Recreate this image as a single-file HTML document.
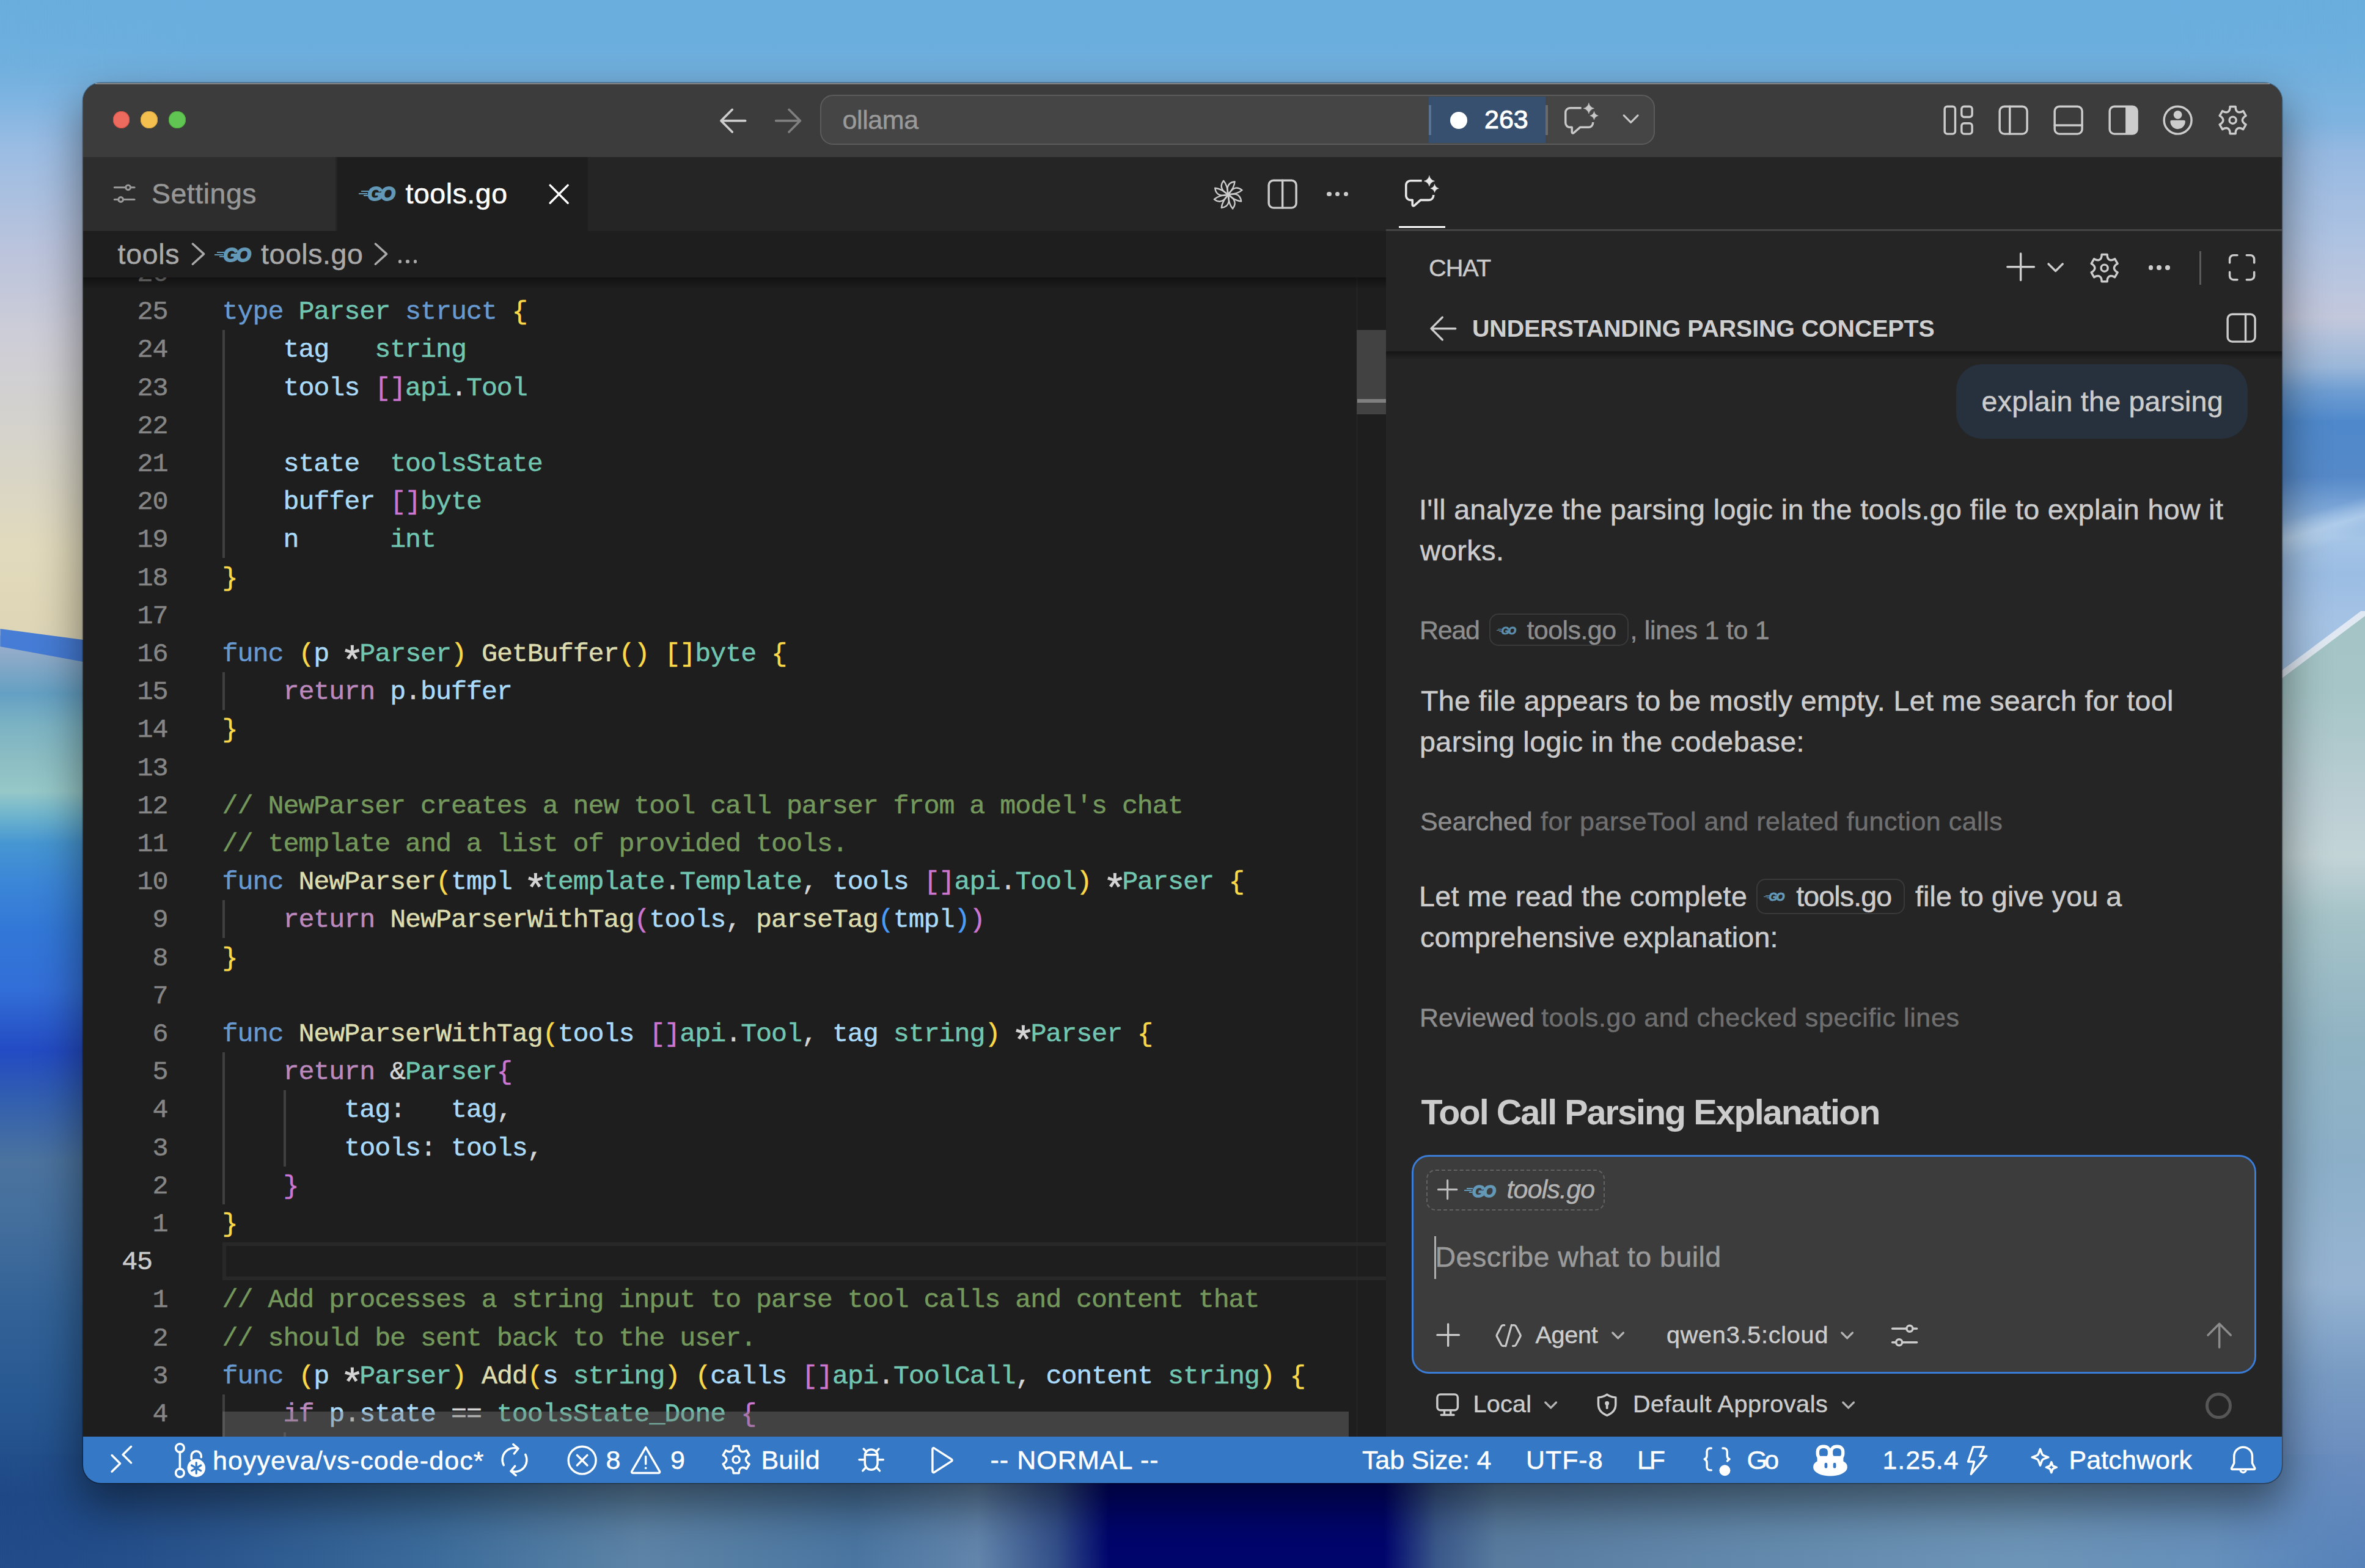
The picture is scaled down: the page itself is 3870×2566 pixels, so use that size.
<!DOCTYPE html>
<html><head><meta charset="utf-8"><title>tools.go - ollama</title>
<style>
html,body{margin:0;padding:0}
body{width:3870px;height:2566px;position:relative;overflow:hidden;background:#6aaedd;font-family:"Liberation Sans",sans-serif}
div,span.t,svg{position:absolute}
span.t{white-space:pre;display:block}

.cl,.ln{font:43.4px/62.2px "Liberation Mono",monospace;letter-spacing:-1.084px;white-space:pre;height:62.2px;color:#d4d4d4;-webkit-text-stroke:.5px}.as{display:inline-block;transform:translateY(15.5px) scale(1.5)}.ln{color:#858585;text-align:right}
</style></head><body>
<div style="left:0.0px;top:0.0px;width:420.0px;height:2566.0px;background:linear-gradient(180deg,#69aedd 0px,#6fb0de 100px,#7db4e1 160px,#9abce3 240px,#b9c3dc 400px,#cdcdd7 550px,#d7d4c8 750px,#e1dabc 900px,#ded6b6 1010px,#d8d2b8 1120px);"></div>
<div style="left:0.0px;top:0.0px;width:420.0px;height:2566.0px;background:linear-gradient(180deg,#a0b0cc 1040px,#8caac8 1075px,#64a0c3 1135px,#7db4c3 1190px,#8cbec3 1246px,#96c8c8 1295px,#6eb4cd 1335px,#4696d2 1380px,#3c87d7 1440px,#3278d7 1520px,#326ed7 1620px,#234bc3 1720px,#325faf 1800px,#4b739e 1900px,#436e9c 2000px,#316196 2150px,#275790 2300px,#1e4986 2450px,#224d8a 2566px);clip-path:polygon(0px 1040px,420px 1107px,420px 2566px,0px 2566px);"></div>
<div style="left:0.0px;top:1000.0px;width:420.0px;height:120.0px;background:linear-gradient(180deg,#4a7fd6 0%,#447bd5 70%,#86a3e0 100%);clip-path:polygon(0px 29px,136px 47px,420px 80px,420px 118px,136px 83px,0px 58px);filter:blur(1.2px);"></div>
<div style="left:3450.0px;top:0.0px;width:420.0px;height:2566.0px;background:linear-gradient(180deg,#69aedd 0px,#6fb0de 100px,#7fb3df 200px,#96b9e1 250px,#afc3e1 400px,#c3c8dc 520px,#9bb7d9 600px,#6e9dd2 640px,#4f89cb 690px,#5589c8 780px,#7aa5d7 830px,#a5c5e6 880px,#9bbde3 940px,#a5c3e4 1020px,#a0bfe0 1200px);"></div>
<div style="left:3450.0px;top:0.0px;width:420.0px;height:2566.0px;background:linear-gradient(180deg,#a3c3c4 980px,#a5c5c6 1130px,#b9cdd2 1300px,#c3d4d7 1400px,#a5c3c8 1500px,#91b4c3 1700px,#8cafc8 1900px,#96b4d2 2100px,#789bc3 2250px,#698cbe 2400px,#5582b9 2566px);clip-path:polygon(0px 1317px,420px 1002px,420px 2566px,0px 2566px);"></div>
<div style="left:3350.0px;top:850.0px;width:800.0px;height:60.0px;background:linear-gradient(180deg,rgba(190,215,240,0),rgba(190,215,240,.65) 50%,rgba(190,215,240,0));transform:rotate(-17deg);transform-origin:50% 50%;"></div>
<div style="left:3450.0px;top:1000.0px;width:420.0px;height:330.0px;background:rgba(228,234,243,.95);clip-path:polygon(0px 310px,420px -5px,420px 8px,0px 323px);"></div>
<div style="left:0.0px;top:0.0px;width:3870.0px;height:138.0px;background:linear-gradient(180deg,#69aedd 0%,#6aaedd 50%,#74b0dd 100%);-webkit-mask-image:linear-gradient(90deg,transparent 0px,#000 330px,#000 3540px,transparent 3870px);mask-image:linear-gradient(90deg,transparent 0px,#000 330px,#000 3540px,transparent 3870px);"></div>
<div style="left:0.0px;top:2380.0px;width:3870.0px;height:186.0px;background:linear-gradient(90deg,#1e4986 0px,#27528b 300px,#3b6b9a 700px,#5d84a6 1050px,#4a75a0 1400px,#6285ab 1600px,#324e88 1730px,#00056c 1815px,#00056c 2265px,#3a588a 2350px,#587b9e 2450px,#638aac 2900px,#6c94b6 3300px,#648ebb 3700px,#5d8abc 3870px);-webkit-mask-image:linear-gradient(90deg,transparent 0px,#000 250px,#000 3620px,transparent 3870px);mask-image:linear-gradient(90deg,transparent 0px,#000 250px,#000 3620px,transparent 3870px);"></div>
<div style="left:136.0px;top:136.0px;width:3598.0px;height:2291.0px;border-radius:29px;background:#1e1e1e;box-shadow:0 34px 70px 6px rgba(0,0,0,.45),0 0 0 1.5px rgba(0,0,0,.35);"></div>
<div id="win" style="left:0;top:0;width:3870px;height:2566px;clip-path:inset(136px 136px 139px 136px round 29px)">
<div style="left:136.0px;top:136.0px;width:3598.0px;height:121.0px;background:#3c3c3c;"></div>
<div style="left:184.5px;top:182.2px;width:27.6px;height:27.6px;border-radius:50%;background:#ed6a5e;box-shadow:inset 0 0 0 1px #d55247;"></div>
<div style="left:230.4px;top:182.2px;width:27.6px;height:27.6px;border-radius:50%;background:#f4bf4f;box-shadow:inset 0 0 0 1px #d6a243;"></div>
<div style="left:276.3px;top:182.2px;width:27.6px;height:27.6px;border-radius:50%;background:#61c554;box-shadow:inset 0 0 0 1px #4fa73d;"></div>
<svg style="left:1171.8px;top:170.3px;" width="55.3" height="55.3" viewBox="0 0 16 16" fill="none" stroke="#cccccc" stroke-width="1.05" stroke-linecap="round" stroke-linejoin="round"><path d="M13.8 8H2.4M7.6 2.7L2.3 8l5.3 5.3"/></svg>
<svg style="left:1261.8px;top:170.3px;" width="55.3" height="55.3" viewBox="0 0 16 16" fill="none" stroke="#7f7f7f" stroke-width="1.05" stroke-linecap="round" stroke-linejoin="round"><path d="M2.2 8h11.4M8.4 2.7L13.7 8l-5.3 5.3"/></svg>
<div style="left:1342.0px;top:155.0px;width:1366.0px;height:82.0px;box-sizing:border-box;border:2.6px solid #5c5c5c;border-radius:21px;background:#454545;"></div>
<span class="t" style="left:1378.47px;top:174.79px;font:400 43px/43px 'Liberation Sans',sans-serif;color:#9a9a9a;letter-spacing:-0.389px;-webkit-text-stroke:0.47px;">ollama</span>
<div style="left:2338.0px;top:158.0px;width:191.0px;height:76.0px;background:#38506f;"></div>
<div style="left:2338.0px;top:172.0px;width:4.0px;height:49.0px;background:#5b7392;"></div>
<div style="left:2529.0px;top:172.0px;width:4.0px;height:49.0px;background:#6a6a6a;"></div>
<div style="left:2372.8px;top:182.5px;width:28.0px;height:28.0px;border-radius:50%;background:#fff;"></div>
<span class="t" style="left:2429.00px;top:174.29px;font:400 43px/43px 'Liberation Sans',sans-serif;color:#ffffff;-webkit-text-stroke:1.00px;">263</span>
<svg style="left:2560.3px;top:166.7px;" width="55.3" height="55.3" viewBox="0 0 16 16" fill="none" stroke="#c8c8c8" stroke-width="1.0" stroke-linecap="round" stroke-linejoin="round"><path d="M8 2.82H2.61A2.1 2.1 0 0 0 .51 4.92V9.86A2.1 2.1 0 0 0 2.61 11.96H3.54V14.25a.5.5 0 0 0 .84.37L7.39 11.96H11.4A2.1 2.1 0 0 0 13.5 9.86V9.55" stroke-linecap="butt"/><path d="M11.53 0.49Q12.03 2.49 14.03 2.99Q12.03 3.49 11.53 5.49Q11.03 3.49 9.03 2.99Q11.03 2.49 11.53 0.49ZM14.05 4.52Q14.44 6.08 16.00 6.47Q14.44 6.86 14.05 8.42Q13.66 6.86 12.10 6.47Q13.66 6.08 14.05 4.52Z" fill="#c8c8c8" stroke="#c8c8c8" stroke-width=".15"/></svg>
<svg style="left:2641.3px;top:167.0px;" width="55.3" height="55.3" viewBox="0 0 16 16" fill="none" stroke="#c8c8c8" stroke-width="0.9" stroke-linecap="round" stroke-linejoin="round"><path d="M4.7 6.35L8 9.65l3.300-3.300"/></svg>
<svg style="left:3177.3px;top:169.3px;" width="55.3" height="55.3" viewBox="0 0 16 16" fill="none" stroke="#ccc" stroke-width="1.0" stroke-linecap="round" stroke-linejoin="round"><rect x="1.5" y="1.5" width="5" height="13" rx="1.2"/><rect x="9.5" y="1.5" width="5" height="5" rx="1.2"/><rect x="9.5" y="9.5" width="5" height="5" rx="1.2"/></svg>
<svg style="left:3267.3px;top:169.3px;" width="55.3" height="55.3" viewBox="0 0 16 16" fill="none" stroke="#ccc" stroke-width="1.0" stroke-linecap="round" stroke-linejoin="round"><rect x="1.5" y="1.5" width="13" height="13" rx="2.2"/><path d="M6.300 1.500v13"/></svg>
<svg style="left:3357.3px;top:169.3px;" width="55.3" height="55.3" viewBox="0 0 16 16" fill="none" stroke="#ccc" stroke-width="1.0" stroke-linecap="round" stroke-linejoin="round"><rect x="1.5" y="1.5" width="13" height="13" rx="2.2"/><path d="M1.5 10.4h13"/></svg>
<svg style="left:3447.3px;top:169.3px;" width="55.3" height="55.3" viewBox="0 0 16 16" fill="none" stroke="#ccc" stroke-width="1.0" stroke-linecap="round" stroke-linejoin="round"><path d="M9 1.5h3.3a2.2 2.2 0 0 1 2.2 2.2v8.6a2.2 2.2 0 0 1-2.2 2.2H9z" fill="#ccc" stroke="none"/><rect x="1.5" y="1.5" width="13" height="13" rx="2.2"/></svg>
<svg style="left:3536.3px;top:169.3px;" width="55.3" height="55.3" viewBox="0 0 16 16" fill="none" stroke="#ccc" stroke-width="1.0" stroke-linecap="round" stroke-linejoin="round"><circle cx="8" cy="8" r="6.5"/><circle cx="8" cy="5.45" r="2" fill="#ccc" stroke="none"/><path d="M5.2 8.05h5.6a.75.75 0 0 1 .75.8c-.15 1.9-1.6 3.35-3.55 3.35S4.6 10.750 4.450 8.850a.75.75 0 0 1 .75-.8z" fill="#ccc" stroke="none"/></svg>
<svg style="left:3626.3px;top:169.3px;" width="55.3" height="55.3" viewBox="0 0 16 16" fill="none" stroke="#ccc" stroke-width="1.0" stroke-linecap="round" stroke-linejoin="round"><path d="M6.69 1.58L9.31 1.58Q9.27 3.42 10.28 4.06Q11.33 4.61 12.91 3.66L14.21 5.92Q12.60 6.81 12.55 8.00Q12.60 9.19 14.21 10.08L12.91 12.34Q11.33 11.39 10.28 11.94Q9.27 12.58 9.31 14.42L6.69 14.42Q6.73 12.58 5.73 11.94Q4.67 11.39 3.09 12.34L1.79 10.08Q3.40 9.19 3.45 8.00Q3.40 6.81 1.79 5.92L3.09 3.66Q4.67 4.61 5.72 4.06Q6.73 3.42 6.69 1.58Z"/><circle cx="8" cy="8" r="1.6"/></svg>
<div style="left:136.0px;top:257.0px;width:3598.0px;height:121.0px;background:#252526;"></div>
<div style="left:136.0px;top:257.0px;width:412.5px;height:121.0px;background:#2d2d2d;"></div>
<div style="left:548.5px;top:257.0px;width:3.0px;height:121.0px;background:#252526;"></div>
<div style="left:551.5px;top:257.0px;width:410.0px;height:121.0px;background:#1e1e1e;"></div>
<svg style="left:175.8px;top:288.9px;" width="55.3" height="55.3" viewBox="0 0 16 16" fill="none" stroke="#9a9a9a" stroke-width="0.88" stroke-linecap="round" stroke-linejoin="round"><path d="M3.250 5.150h5.400M10.850 5.150h1.900M3.250 10.850h1.900M7.350 10.850h5.400"/><circle cx="9.740" cy="5.150" r="1.120"/><circle cx="6.260" cy="10.850" r="1.120"/></svg>
<span class="t" style="left:248.01px;top:293.63px;font:400 46.5px/46.5px 'Liberation Sans',sans-serif;color:#979797;letter-spacing:0.497px;-webkit-text-stroke:0.51px;">Settings</span>
<span class="t" style="left:601.2px;top:302.3px;font:italic 700 31.7px/31.7px 'Liberation Sans',sans-serif;color:#6398b7;letter-spacing:-3.62px;-webkit-text-stroke:1.76px #6398b7;transform:scaleX(1.0);transform-origin:0 0">GO</span>
<div style="left:591.1px;top:312.3px;width:11.6px;height:1.7px;background:#6398b7;"></div>
<div style="left:586.6px;top:315.9px;width:14.1px;height:1.7px;background:#6398b7;"></div>
<div style="left:595.2px;top:319.4px;width:6.5px;height:1.7px;background:#6398b7;"></div>
<span class="t" style="left:663.51px;top:293.63px;font:400 46.5px/46.5px 'Liberation Sans',sans-serif;color:#ffffff;letter-spacing:0.525px;-webkit-text-stroke:0.51px;">tools.go</span>
<svg style="left:886.6px;top:289.9px;" width="55.3" height="55.3" viewBox="0 0 16 16" fill="none" stroke="#ffffff" stroke-width="1.0" stroke-linecap="round" stroke-linejoin="round"><path d="M3.800 3.800l8.400 8.400M12.200 3.800l-8.400 8.400"/></svg>
<svg style="left:1981.8px;top:290.5px;" width="55.3" height="55.3" viewBox="0 0 16 16" fill="none" stroke="#ccc" stroke-width="0.7" stroke-linecap="round" stroke-linejoin="round"><path d="M0 0C-1.3 -1.6 -3.5 -4.6 .1 -6.95C.9 -5 .6 -2.2 0 0Z" transform="translate(8 8) rotate(-19)"/><path d="M0 0C-1.3 -1.6 -3.5 -4.6 .1 -6.95C.9 -5 .6 -2.2 0 0Z" transform="translate(8 8) rotate(26)"/><path d="M0 0C-1.3 -1.6 -3.5 -4.6 .1 -6.95C.9 -5 .6 -2.2 0 0Z" transform="translate(8 8) rotate(71)"/><path d="M0 0C-1.3 -1.6 -3.5 -4.6 .1 -6.95C.9 -5 .6 -2.2 0 0Z" transform="translate(8 8) rotate(116)"/><path d="M0 0C-1.3 -1.6 -3.5 -4.6 .1 -6.95C.9 -5 .6 -2.2 0 0Z" transform="translate(8 8) rotate(161)"/><path d="M0 0C-1.3 -1.6 -3.5 -4.6 .1 -6.95C.9 -5 .6 -2.2 0 0Z" transform="translate(8 8) rotate(206)"/><path d="M0 0C-1.3 -1.6 -3.5 -4.6 .1 -6.95C.9 -5 .6 -2.2 0 0Z" transform="translate(8 8) rotate(251)"/><path d="M0 0C-1.3 -1.6 -3.5 -4.6 .1 -6.95C.9 -5 .6 -2.2 0 0Z" transform="translate(8 8) rotate(296)"/></svg>
<svg style="left:2071.3px;top:289.6px;" width="55.3" height="55.3" viewBox="0 0 16 16" fill="none" stroke="#ccc" stroke-width="1.0" stroke-linecap="round" stroke-linejoin="round"><rect x="1.500" y="1.500" width="13" height="13" rx="2.200"/><path d="M8 1.500v13"/></svg>
<div style="left:2171.4px;top:313.8px;width:7.2px;height:7.2px;border-radius:50%;background:#ccc;"></div>
<div style="left:2185.2px;top:313.8px;width:7.2px;height:7.2px;border-radius:50%;background:#ccc;"></div>
<div style="left:2198.9px;top:313.8px;width:7.2px;height:7.2px;border-radius:50%;background:#ccc;"></div>
<svg style="left:2299.3px;top:286.1px;" width="55.3" height="55.3" viewBox="0 0 16 16" fill="none" stroke="#e7e7e7" stroke-width="1.05" stroke-linecap="round" stroke-linejoin="round"><path d="M8 2.82H2.61A2.1 2.1 0 0 0 .51 4.92V9.86A2.1 2.1 0 0 0 2.61 11.96H3.54V14.25a.5.5 0 0 0 .84.37L7.39 11.96H11.4A2.1 2.1 0 0 0 13.5 9.86V9.55" stroke-linecap="butt"/><path d="M11.53 0.49Q12.03 2.49 14.03 2.99Q12.03 3.49 11.53 5.49Q11.03 3.49 9.03 2.99Q11.03 2.49 11.53 0.49ZM14.05 4.52Q14.44 6.08 16.00 6.47Q14.44 6.86 14.05 8.42Q13.66 6.86 12.10 6.47Q13.66 6.08 14.05 4.52Z" fill="#e7e7e7" stroke="#e7e7e7" stroke-width=".15"/></svg>
<div style="left:2289.0px;top:370.0px;width:76.0px;height:3.2px;background:#ffffff;"></div>
<div style="left:136.0px;top:454.0px;width:2132.0px;height:1897.0px;background:#1e1e1e;"></div>
<div style="left:364.4px;top:540.2px;width:3.4px;height:373.2px;background:#404040;"></div>
<div style="left:364.4px;top:1100.0px;width:3.4px;height:62.2px;background:#404040;"></div>
<div style="left:364.4px;top:1473.2px;width:3.4px;height:62.2px;background:#404040;"></div>
<div style="left:364.4px;top:1722.0px;width:3.4px;height:248.8px;background:#404040;"></div>
<div style="left:364.4px;top:2281.8px;width:3.4px;height:186.6px;background:#404040;"></div>
<div style="left:464.2px;top:1784.2px;width:3.4px;height:124.4px;background:#404040;"></div>
<div style="left:464.2px;top:2344.0px;width:3.4px;height:124.4px;background:#404040;"></div>
<div style="left:364.4px;top:2033.2px;width:1903.6px;height:61.5px;box-sizing:border-box;border:6.4px solid #282828;border-right:none;"></div>
<div class="ln" style="left:174.44px;top:417.90px;width:100px">26</div>
<div class="ln" style="left:174.44px;top:480.10px;width:100px">25</div>
<div class="cl" style="left:363.6px;top:480.10px"><span style="color:#679ad1">type</span> <span style="color:#71c6b1">Parser</span> <span style="color:#679ad1">struct</span> <span style="color:#f9d849">{</span></div>
<div class="ln" style="left:174.44px;top:542.30px;width:100px">24</div>
<div class="cl" style="left:363.6px;top:542.30px">    <span style="color:#aadafa">tag</span>   <span style="color:#71c6b1">string</span></div>
<div class="ln" style="left:174.44px;top:604.50px;width:100px">23</div>
<div class="cl" style="left:363.6px;top:604.50px">    <span style="color:#aadafa">tools</span> <span style="color:#cc76d1">[]</span><span style="color:#71c6b1">api</span>.<span style="color:#71c6b1">Tool</span></div>
<div class="ln" style="left:174.44px;top:666.70px;width:100px">22</div>
<div class="ln" style="left:174.44px;top:728.90px;width:100px">21</div>
<div class="cl" style="left:363.6px;top:728.90px">    <span style="color:#aadafa">state</span>  <span style="color:#71c6b1">toolsState</span></div>
<div class="ln" style="left:174.44px;top:791.10px;width:100px">20</div>
<div class="cl" style="left:363.6px;top:791.10px">    <span style="color:#aadafa">buffer</span> <span style="color:#cc76d1">[]</span><span style="color:#71c6b1">byte</span></div>
<div class="ln" style="left:174.44px;top:853.30px;width:100px">19</div>
<div class="cl" style="left:363.6px;top:853.30px">    <span style="color:#aadafa">n</span>      <span style="color:#71c6b1">int</span></div>
<div class="ln" style="left:174.44px;top:915.50px;width:100px">18</div>
<div class="cl" style="left:363.6px;top:915.50px"><span style="color:#f9d849">}</span></div>
<div class="ln" style="left:174.44px;top:977.70px;width:100px">17</div>
<div class="ln" style="left:174.44px;top:1039.90px;width:100px">16</div>
<div class="cl" style="left:363.6px;top:1039.90px"><span style="color:#679ad1">func</span> <span style="color:#f9d849">(</span><span style="color:#aadafa">p</span> <span class="as">*</span><span style="color:#71c6b1">Parser</span><span style="color:#f9d849">)</span> <span style="color:#dcdcaf">GetBuffer</span><span style="color:#f9d849">()</span> <span style="color:#f9d849">[]</span><span style="color:#71c6b1">byte</span> <span style="color:#f9d849">{</span></div>
<div class="ln" style="left:174.44px;top:1102.10px;width:100px">15</div>
<div class="cl" style="left:363.6px;top:1102.10px">    <span style="color:#bc89bd">return</span> <span style="color:#aadafa">p</span>.<span style="color:#aadafa">buffer</span></div>
<div class="ln" style="left:174.44px;top:1164.30px;width:100px">14</div>
<div class="cl" style="left:363.6px;top:1164.30px"><span style="color:#f9d849">}</span></div>
<div class="ln" style="left:174.44px;top:1226.50px;width:100px">13</div>
<div class="ln" style="left:174.44px;top:1288.70px;width:100px">12</div>
<div class="cl" style="left:363.6px;top:1288.70px"><span style="color:#74985c">// NewParser creates a new tool call parser from a model's chat</span></div>
<div class="ln" style="left:174.44px;top:1350.90px;width:100px">11</div>
<div class="cl" style="left:363.6px;top:1350.90px"><span style="color:#74985c">// template and a list of provided tools.</span></div>
<div class="ln" style="left:174.44px;top:1413.10px;width:100px">10</div>
<div class="cl" style="left:363.6px;top:1413.10px"><span style="color:#679ad1">func</span> <span style="color:#dcdcaf">NewParser</span><span style="color:#f9d849">(</span><span style="color:#aadafa">tmpl</span> <span class="as">*</span><span style="color:#71c6b1">template</span>.<span style="color:#71c6b1">Template</span>, <span style="color:#aadafa">tools</span> <span style="color:#cc76d1">[]</span><span style="color:#71c6b1">api</span>.<span style="color:#71c6b1">Tool</span><span style="color:#f9d849">)</span> <span class="as">*</span><span style="color:#71c6b1">Parser</span> <span style="color:#f9d849">{</span></div>
<div class="ln" style="left:174.44px;top:1475.30px;width:100px">9</div>
<div class="cl" style="left:363.6px;top:1475.30px">    <span style="color:#bc89bd">return</span> <span style="color:#dcdcaf">NewParserWithTag</span><span style="color:#cc76d1">(</span><span style="color:#aadafa">tools</span>, <span style="color:#dcdcaf">parseTag</span><span style="color:#4a9df8">(</span><span style="color:#aadafa">tmpl</span><span style="color:#4a9df8">)</span><span style="color:#cc76d1">)</span></div>
<div class="ln" style="left:174.44px;top:1537.50px;width:100px">8</div>
<div class="cl" style="left:363.6px;top:1537.50px"><span style="color:#f9d849">}</span></div>
<div class="ln" style="left:174.44px;top:1599.70px;width:100px">7</div>
<div class="ln" style="left:174.44px;top:1661.90px;width:100px">6</div>
<div class="cl" style="left:363.6px;top:1661.90px"><span style="color:#679ad1">func</span> <span style="color:#dcdcaf">NewParserWithTag</span><span style="color:#f9d849">(</span><span style="color:#aadafa">tools</span> <span style="color:#cc76d1">[]</span><span style="color:#71c6b1">api</span>.<span style="color:#71c6b1">Tool</span>, <span style="color:#aadafa">tag</span> <span style="color:#71c6b1">string</span><span style="color:#f9d849">)</span> <span class="as">*</span><span style="color:#71c6b1">Parser</span> <span style="color:#f9d849">{</span></div>
<div class="ln" style="left:174.44px;top:1724.10px;width:100px">5</div>
<div class="cl" style="left:363.6px;top:1724.10px">    <span style="color:#bc89bd">return</span> &amp;<span style="color:#71c6b1">Parser</span><span style="color:#cc76d1">{</span></div>
<div class="ln" style="left:174.44px;top:1786.30px;width:100px">4</div>
<div class="cl" style="left:363.6px;top:1786.30px">        <span style="color:#aadafa">tag</span>:   <span style="color:#aadafa">tag</span>,</div>
<div class="ln" style="left:174.44px;top:1848.50px;width:100px">3</div>
<div class="cl" style="left:363.6px;top:1848.50px">        <span style="color:#aadafa">tools</span>: <span style="color:#aadafa">tools</span>,</div>
<div class="ln" style="left:174.44px;top:1910.70px;width:100px">2</div>
<div class="cl" style="left:363.6px;top:1910.70px">    <span style="color:#cc76d1">}</span></div>
<div class="ln" style="left:174.44px;top:1972.90px;width:100px">1</div>
<div class="cl" style="left:363.6px;top:1972.90px"><span style="color:#f9d849">}</span></div>
<div class="ln" style="left:199.14px;top:2035.10px;color:#cccccc;text-align:left">45</div>
<div class="ln" style="left:174.44px;top:2097.30px;width:100px">1</div>
<div class="cl" style="left:363.6px;top:2097.30px"><span style="color:#74985c">// Add processes a string input to parse tool calls and content that</span></div>
<div class="ln" style="left:174.44px;top:2159.50px;width:100px">2</div>
<div class="cl" style="left:363.6px;top:2159.50px"><span style="color:#74985c">// should be sent back to the user.</span></div>
<div class="ln" style="left:174.44px;top:2221.70px;width:100px">3</div>
<div class="cl" style="left:363.6px;top:2221.70px"><span style="color:#679ad1">func</span> <span style="color:#f9d849">(</span><span style="color:#aadafa">p</span> <span class="as">*</span><span style="color:#71c6b1">Parser</span><span style="color:#f9d849">)</span> <span style="color:#dcdcaf">Add</span><span style="color:#f9d849">(</span><span style="color:#aadafa">s</span> <span style="color:#71c6b1">string</span><span style="color:#f9d849">)</span> <span style="color:#f9d849">(</span><span style="color:#aadafa">calls</span> <span style="color:#cc76d1">[]</span><span style="color:#71c6b1">api</span>.<span style="color:#71c6b1">ToolCall</span>, <span style="color:#aadafa">content</span> <span style="color:#71c6b1">string</span><span style="color:#f9d849">)</span> <span style="color:#f9d849">{</span></div>
<div class="ln" style="left:174.44px;top:2283.90px;width:100px">4</div>
<div class="cl" style="left:363.6px;top:2283.90px">    <span style="color:#bc89bd">if</span> <span style="color:#aadafa">p</span>.<span style="color:#aadafa">state</span> == <span style="color:#71c6b1">toolsState_Done</span> <span style="color:#cc76d1">{</span></div>
<div style="left:364.4px;top:2309.5px;width:1842.6px;height:42.0px;background:rgba(121,121,121,.4);"></div>
<div style="left:2220.0px;top:454.0px;width:1.3px;height:1897.0px;background:#2b2b2b;"></div>
<div style="left:2220.0px;top:540.0px;width:48.0px;height:138.0px;background:#424242;"></div>
<div style="left:2221.0px;top:653.0px;width:47.0px;height:6.0px;background:#7f7f7f;"></div>
<div style="left:136.0px;top:378.0px;width:2132.0px;height:76.0px;background:#1e1e1e;"></div>
<span class="t" style="left:192.51px;top:392.63px;font:400 46.5px/46.5px 'Liberation Sans',sans-serif;color:#a9a9a9;letter-spacing:0.719px;-webkit-text-stroke:0.51px;">tools</span>
<svg style="left:296.9px;top:388.4px;" width="55.3" height="55.3" viewBox="0 0 16 16" fill="none" stroke="#a9a9a9" stroke-width="1.0" stroke-linecap="round" stroke-linejoin="round"><path d="M5.300 3.200L10.600 8l-5.300 4.800"/></svg>
<span class="t" style="left:365.3px;top:402.3px;font:italic 700 31.7px/31.7px 'Liberation Sans',sans-serif;color:#6398b7;letter-spacing:-3.62px;-webkit-text-stroke:1.76px #6398b7;transform:scaleX(1.0);transform-origin:0 0">GO</span>
<div style="left:355.2px;top:412.3px;width:11.6px;height:1.7px;background:#6398b7;"></div>
<div style="left:350.7px;top:415.9px;width:14.1px;height:1.7px;background:#6398b7;"></div>
<div style="left:359.3px;top:419.4px;width:6.5px;height:1.7px;background:#6398b7;"></div>
<span class="t" style="left:427.01px;top:392.63px;font:400 46.5px/46.5px 'Liberation Sans',sans-serif;color:#a9a9a9;letter-spacing:0.554px;-webkit-text-stroke:0.51px;">tools.go</span>
<svg style="left:595.9px;top:388.4px;" width="55.3" height="55.3" viewBox="0 0 16 16" fill="none" stroke="#a9a9a9" stroke-width="1.0" stroke-linecap="round" stroke-linejoin="round"><path d="M5.300 3.200L10.600 8l-5.300 4.800"/></svg>
<div style="left:651.5px;top:425.2px;width:5.6px;height:5.6px;border-radius:50%;background:#a9a9a9;"></div>
<div style="left:664.1px;top:425.2px;width:5.6px;height:5.6px;border-radius:50%;background:#a9a9a9;"></div>
<div style="left:676.7px;top:425.2px;width:5.6px;height:5.6px;border-radius:50%;background:#a9a9a9;"></div>
<div style="left:136.0px;top:454.0px;width:2132.0px;height:20.0px;background:linear-gradient(180deg,rgba(0,0,0,.42),rgba(0,0,0,0));"></div>
<div style="left:2268.0px;top:375.0px;width:1466.0px;height:1976.0px;background:#252526;"></div>
<div style="left:2268.0px;top:375.0px;width:1466.0px;height:3.2px;background:#454545;"></div>
<span class="t" style="left:2337.94px;top:418.69px;font:400 39.7px/39.7px 'Liberation Sans',sans-serif;color:#cacaca;letter-spacing:-0.958px;-webkit-text-stroke:0.44px;">CHAT</span>
<svg style="left:3279.3px;top:408.9px;" width="55.3" height="55.3" viewBox="0 0 16 16" fill="none" stroke="#ccc" stroke-width="1.0" stroke-linecap="round" stroke-linejoin="round"><path d="M8 1.700v12.600M1.700 8h12.600"/></svg>
<svg style="left:3336.3px;top:409.9px;" width="55.3" height="55.3" viewBox="0 0 16 16" fill="none" stroke="#ccc" stroke-width="1.0" stroke-linecap="round" stroke-linejoin="round"><path d="M4.650 6.350L8 9.700l3.350-3.350"/></svg>
<svg style="left:3416.3px;top:410.7px;" width="55.3" height="55.3" viewBox="0 0 16 16" fill="none" stroke="#ccc" stroke-width="1.0" stroke-linecap="round" stroke-linejoin="round"><path d="M6.69 1.58L9.31 1.58Q9.27 3.42 10.28 4.06Q11.33 4.61 12.91 3.66L14.21 5.92Q12.60 6.81 12.55 8.00Q12.60 9.19 14.21 10.08L12.91 12.34Q11.33 11.39 10.28 11.94Q9.27 12.58 9.31 14.42L6.69 14.42Q6.73 12.58 5.73 11.94Q4.67 11.39 3.09 12.34L1.79 10.08Q3.40 9.19 3.45 8.00Q3.40 6.81 1.79 5.92L3.09 3.66Q4.67 4.61 5.72 4.06Q6.73 3.42 6.69 1.58Z"/><circle cx="8" cy="8" r="1.6"/></svg>
<div style="left:3515.5px;top:434.2px;width:7.4px;height:7.4px;border-radius:50%;background:#ccc;"></div>
<div style="left:3529.4px;top:434.2px;width:7.4px;height:7.4px;border-radius:50%;background:#ccc;"></div>
<div style="left:3543.3px;top:434.2px;width:7.4px;height:7.4px;border-radius:50%;background:#ccc;"></div>
<div style="left:3598.8px;top:411.0px;width:3.2px;height:55.0px;background:#5a5a5a;"></div>
<svg style="left:3640.5px;top:410.4px;" width="55.3" height="55.3" viewBox="0 0 16 16" fill="none" stroke="#ccc" stroke-width="1.0" stroke-linecap="round" stroke-linejoin="round"><path d="M2.200 5.800V4a1.800 1.800 0 0 1 1.800-1.800h1.800M10.200 2.200H12A1.800 1.800 0 0 1 13.800 4v1.800M13.800 10.200V12a1.800 1.800 0 0 1-1.800 1.800h-1.800M5.800 13.800H4A1.800 1.800 0 0 1 2.200 12v-1.800"/></svg>
<svg style="left:2333.8px;top:510.4px;" width="55.3" height="55.3" viewBox="0 0 16 16" fill="none" stroke="#ccc" stroke-width="1.0" stroke-linecap="round" stroke-linejoin="round"><path d="M13.800 8H2.400M7.600 2.700L2.300 8l5.300 5.300"/></svg>
<span class="t" style="left:2409.00px;top:517.84px;font:700 39.4px/39.4px 'Liberation Sans',sans-serif;color:#cfcfcf;letter-spacing:-0.117px;">UNDERSTANDING PARSING CONCEPTS</span>
<svg style="left:3640.3px;top:508.6px;" width="55.3" height="55.3" viewBox="0 0 16 16" fill="none" stroke="#ccc" stroke-width="1.0" stroke-linecap="round" stroke-linejoin="round"><rect x="1.500" y="1.500" width="13" height="13" rx="2.200"/><path d="M10 1.500v13"/></svg>
<div style="left:2268.0px;top:575.0px;width:1466.0px;height:14.0px;background:linear-gradient(180deg,rgba(0,0,0,.42),rgba(0,0,0,0));"></div>
<div style="left:3200.5px;top:596.0px;width:477.5px;height:122.0px;border-radius:42px;background:#27303d;"></div>
<span class="t" style="left:3242.51px;top:633.54px;font:400 46.6px/46.6px 'Liberation Sans',sans-serif;color:#cccccc;letter-spacing:0.221px;-webkit-text-stroke:0.51px;">explain the parsing</span>
<span class="t" style="left:2322.01px;top:810.54px;font:400 46.6px/46.6px 'Liberation Sans',sans-serif;color:#cccccc;letter-spacing:0.367px;-webkit-text-stroke:0.51px;">I'll analyze the parsing logic in the tools.go file to explain how it</span>
<span class="t" style="left:2323.81px;top:877.54px;font:400 46.6px/46.6px 'Liberation Sans',sans-serif;color:#cccccc;letter-spacing:0.495px;-webkit-text-stroke:0.51px;">works.</span>
<span class="t" style="left:2322.97px;top:1009.79px;font:400 43px/43px 'Liberation Sans',sans-serif;color:#8d8d8d;letter-spacing:-1.249px;-webkit-text-stroke:0.47px;">Read</span>
<div style="left:2437.3px;top:1004.3px;width:228.0px;height:53.2px;box-sizing:border-box;border:2.6px solid #3a3a3a;border-radius:15px;"></div>
<span class="t" style="left:2456.6px;top:1024.0px;font:italic 700 17.0px/17.0px 'Liberation Sans',sans-serif;color:#5c8fae;letter-spacing:-1.95px;-webkit-text-stroke:0.95px #5c8fae;transform:scaleX(1.0);transform-origin:0 0">GO</span>
<div style="left:2451.2px;top:1029.4px;width:6.2px;height:0.9px;background:#5c8fae;"></div>
<div style="left:2448.8px;top:1031.3px;width:7.6px;height:0.9px;background:#5c8fae;"></div>
<div style="left:2453.4px;top:1033.2px;width:3.5px;height:0.9px;background:#5c8fae;"></div>
<span class="t" style="left:2498.47px;top:1009.79px;font:400 43px/43px 'Liberation Sans',sans-serif;color:#8d8d8d;letter-spacing:-0.564px;-webkit-text-stroke:0.47px;">tools.go</span>
<span class="t" style="left:2667.47px;top:1009.79px;font:400 43px/43px 'Liberation Sans',sans-serif;color:#8d8d8d;letter-spacing:-0.280px;-webkit-text-stroke:0.47px;">, lines 1 to 1</span>
<span class="t" style="left:2325.01px;top:1123.54px;font:400 46.6px/46.6px 'Liberation Sans',sans-serif;color:#cccccc;letter-spacing:0.348px;-webkit-text-stroke:0.51px;">The file appears to be mostly empty. Let me search for tool</span>
<span class="t" style="left:2323.01px;top:1191.04px;font:400 46.6px/46.6px 'Liberation Sans',sans-serif;color:#cccccc;letter-spacing:0.447px;-webkit-text-stroke:0.51px;">parsing logic in the codebase:</span>
<span class="t" style="left:2323.97px;top:1322.59px;font:400 43px/43px 'Liberation Sans',sans-serif;color:#8d8d8d;letter-spacing:-0.064px;-webkit-text-stroke:0.47px;">Searched</span>
<span class="t" style="left:2520.97px;top:1322.59px;font:400 43px/43px 'Liberation Sans',sans-serif;color:#6f6f6f;letter-spacing:0.501px;-webkit-text-stroke:0.47px;">for parseTool and related function calls</span>
<span class="t" style="left:2322.01px;top:1443.54px;font:400 46.6px/46.6px 'Liberation Sans',sans-serif;color:#cccccc;letter-spacing:0.368px;-webkit-text-stroke:0.51px;">Let me read the complete</span>
<div style="left:2874.0px;top:1438.0px;width:242.7px;height:58.0px;box-sizing:border-box;border:2.6px solid #3a3a3a;border-radius:15px;"></div>
<span class="t" style="left:2894.3px;top:1459.3px;font:italic 700 18.1px/18.1px 'Liberation Sans',sans-serif;color:#6398b7;letter-spacing:-2.07px;-webkit-text-stroke:1.00px #6398b7;transform:scaleX(1.0);transform-origin:0 0">GO</span>
<div style="left:2888.6px;top:1465.0px;width:6.6px;height:1.0px;background:#6398b7;"></div>
<div style="left:2886.0px;top:1467.0px;width:8.0px;height:1.0px;background:#6398b7;"></div>
<div style="left:2890.9px;top:1469.0px;width:3.7px;height:1.0px;background:#6398b7;"></div>
<span class="t" style="left:2939.31px;top:1443.54px;font:400 46.6px/46.6px 'Liberation Sans',sans-serif;color:#cccccc;letter-spacing:-0.918px;-webkit-text-stroke:0.51px;">tools.go</span>
<span class="t" style="left:3134.01px;top:1443.54px;font:400 46.6px/46.6px 'Liberation Sans',sans-serif;color:#cccccc;letter-spacing:0.087px;-webkit-text-stroke:0.51px;">file to give you a</span>
<span class="t" style="left:2324.01px;top:1511.04px;font:400 46.6px/46.6px 'Liberation Sans',sans-serif;color:#cccccc;letter-spacing:0.211px;-webkit-text-stroke:0.51px;">comprehensive explanation:</span>
<span class="t" style="left:2322.97px;top:1643.59px;font:400 43px/43px 'Liberation Sans',sans-serif;color:#8d8d8d;letter-spacing:-0.121px;-webkit-text-stroke:0.47px;">Reviewed</span>
<span class="t" style="left:2521.97px;top:1643.59px;font:400 43px/43px 'Liberation Sans',sans-serif;color:#6f6f6f;letter-spacing:0.643px;-webkit-text-stroke:0.47px;">tools.go and checked specific lines</span>
<span class="t" style="left:2325.50px;top:1792.11px;font:700 57.5px/57.5px 'Liberation Sans',sans-serif;color:#cccccc;letter-spacing:-1.982px;">Tool Call Parsing Explanation</span>
<div style="left:2310.0px;top:1890.0px;width:1381.5px;height:357.5px;box-sizing:border-box;border:3.5px solid #3b7cd6;border-radius:28px;background:#3c3c3c;"></div>
<div style="left:2334.4px;top:1914.2px;width:292.0px;height:67.0px;box-sizing:border-box;border:2.800px dashed #636363;border-radius:15px;"></div>
<svg style="left:2340.5px;top:1919.3px;" width="55.3" height="55.3" viewBox="0 0 16 16" fill="none" stroke="#bdbdbd" stroke-width="0.9" stroke-linecap="round" stroke-linejoin="round"><path d="M8 3.600v8.800M3.600 8h8.800"/></svg>
<span class="t" style="left:2408.8px;top:1935.8px;font:italic 700 27.1px/27.1px 'Liberation Sans',sans-serif;color:#6398b7;letter-spacing:-3.10px;-webkit-text-stroke:1.51px #6398b7;transform:scaleX(1.0);transform-origin:0 0">GO</span>
<div style="left:2400.2px;top:1944.4px;width:9.9px;height:1.5px;background:#6398b7;"></div>
<div style="left:2396.3px;top:1947.4px;width:12.0px;height:1.5px;background:#6398b7;"></div>
<div style="left:2403.6px;top:1950.4px;width:5.6px;height:1.5px;background:#6398b7;"></div>
<span class="t" style="left:2465.47px;top:1925.19px;font:italic 400 43px/43px 'Liberation Sans',sans-serif;color:#b4b4b4;letter-spacing:-0.849px;-webkit-text-stroke:0.47px;">tools.go</span>
<div style="left:2346.8px;top:2023.0px;width:3.3px;height:69.5px;background:#aeaeae;"></div>
<span class="t" style="left:2348.51px;top:2034.24px;font:400 46.6px/46.6px 'Liberation Sans',sans-serif;color:#9a9a9a;letter-spacing:0.446px;-webkit-text-stroke:0.51px;">Describe what to build</span>
<svg style="left:2342.3px;top:2157.0px;" width="55.3" height="55.3" viewBox="0 0 16 16" fill="none" stroke="#cccccc" stroke-width="0.95" stroke-linecap="round" stroke-linejoin="round"><path d="M8 2.850v10.300M2.850 8h10.300"/></svg>
<svg style="left:2440.7px;top:2157.8px;" width="55.3" height="55.3" viewBox="0 0 16 16" fill="none" stroke="#c8c8c8" stroke-width="0.95" stroke-linecap="round" stroke-linejoin="round"><path d="M6 3.100H5.400a1 1 0 0 0-.87.510L2.500 7.500a1 1 0 0 0 0 1l2.030 3.890a1 1 0 0 0 .87.510H6M10 3.100h.6a1 1 0 0 1 .87.510L13.500 7.500a1 1 0 0 1 0 1l-2.030 3.890a1 1 0 0 1-.87.510H10M9.400 3L6.600 13"/></svg>
<span class="t" style="left:2512.44px;top:2165.47px;font:400 39.6px/39.6px 'Liberation Sans',sans-serif;color:#cccccc;letter-spacing:-0.268px;-webkit-text-stroke:0.44px;">Agent</span>
<svg style="left:2619.8px;top:2158.3px;" width="55.3" height="55.3" viewBox="0 0 16 16" fill="none" stroke="#b4b4b4" stroke-width="0.95" stroke-linecap="round" stroke-linejoin="round"><path d="M5.450 6.650L8 9.250l2.550-2.600"/></svg>
<span class="t" style="left:2726.94px;top:2165.47px;font:400 39.6px/39.6px 'Liberation Sans',sans-serif;color:#cccccc;letter-spacing:0.769px;-webkit-text-stroke:0.44px;">qwen3.5:cloud</span>
<svg style="left:2995.2px;top:2158.3px;" width="55.3" height="55.3" viewBox="0 0 16 16" fill="none" stroke="#b4b4b4" stroke-width="0.95" stroke-linecap="round" stroke-linejoin="round"><path d="M5.450 6.650L8 9.250l2.550-2.600"/></svg>
<svg style="left:3088.7px;top:2158.3px;" width="55.3" height="55.3" viewBox="0 0 16 16" fill="none" stroke="#cccccc" stroke-width="1.0" stroke-linecap="round" stroke-linejoin="round"><path d="M2.200 4.700h6.700M11.900 4.700h1.900M2.200 11.200h1.700M6.900 11.200h6.900"/><circle cx="10.400" cy="4.700" r="1.450"/><circle cx="5.400" cy="11.200" r="1.450"/></svg>
<svg style="left:3604.2px;top:2158.3px;" width="55.3" height="55.3" viewBox="0 0 16 16" fill="none" stroke="#8c8c8c" stroke-width="1.0" stroke-linecap="round" stroke-linejoin="round"><path d="M8 13.600V2.500M2.600 7.800L8 2.400l5.400 5.400"/></svg>
<svg style="left:2340.9px;top:2271.3px;" width="55.3" height="55.3" viewBox="0 0 16 16" fill="none" stroke="#cccccc" stroke-width="1.0" stroke-linecap="round" stroke-linejoin="round"><rect x="3.150" y="3.150" width="9.700" height="7.500" rx="1.500"/><path d="M5 12.900h6M6.500 10.800v2M9.500 10.800v2"/></svg>
<span class="t" style="left:2410.44px;top:2278.47px;font:400 39.6px/39.6px 'Liberation Sans',sans-serif;color:#cccccc;letter-spacing:0.232px;-webkit-text-stroke:0.44px;">Local</span>
<svg style="left:2509.8px;top:2271.7px;" width="55.3" height="55.3" viewBox="0 0 16 16" fill="none" stroke="#b4b4b4" stroke-width="0.95" stroke-linecap="round" stroke-linejoin="round"><path d="M5.450 6.650L8 9.250l2.550-2.600"/></svg>
<svg style="left:2602.3px;top:2271.3px;" width="55.3" height="55.3" viewBox="0 0 16 16" fill="none" stroke="#cccccc" stroke-width="1.0" stroke-linecap="round" stroke-linejoin="round"><path d="M8 3.200c1.200.9 2.500 1.300 4.100 1.400v3.200c0 2.500-1.500 4.300-4.100 5.300-2.600-1-4.100-2.800-4.100-5.300V4.600C5.500 4.500 6.800 4.100 8 3.200z"/><circle cx="8" cy="7.400" r="1" fill="#ccc" stroke="none"/><path d="M8 7.600v2" stroke-width="1.100"/></svg>
<span class="t" style="left:2671.94px;top:2278.47px;font:400 39.6px/39.6px 'Liberation Sans',sans-serif;color:#cccccc;letter-spacing:0.539px;-webkit-text-stroke:0.44px;">Default Approvals</span>
<svg style="left:2996.8px;top:2271.7px;" width="55.3" height="55.3" viewBox="0 0 16 16" fill="none" stroke="#b4b4b4" stroke-width="0.95" stroke-linecap="round" stroke-linejoin="round"><path d="M5.450 6.650L8 9.250l2.550-2.600"/></svg>
<div style="left:3609.0px;top:2278.5px;width:43.0px;height:43.0px;box-sizing:border-box;border:5px solid #565656;border-radius:50%;"></div>
<div style="left:136.0px;top:2351.0px;width:3598.0px;height:76.0px;background:#3478c6;"></div>
<svg style="left:171.0px;top:2360.3px;" width="55.3" height="55.3" viewBox="0 0 16 16" fill="none" stroke="#ffffff" stroke-width="1.0" stroke-linecap="round" stroke-linejoin="round"><path d="M3.500 6.250l3.900 3.850-3.900 3.850M12.600 2.100L8.700 5.950l3.900 3.850"/></svg>
<svg style="left:280.0px;top:2357.5px;" width="64.0" height="64.0" viewBox="0 0 16 16" fill="none" stroke="#ffffff" stroke-width="0.9" stroke-linecap="round" stroke-linejoin="round"><circle cx="3.600" cy="2.900" r="1.700"/><circle cx="3.600" cy="13.100" r="1.700"/><path d="M3.600 4.600v6.800"/><path d="M8.300 7.500V6.200a2 2 0 0 1 4 0v.5"/><circle cx="10.300" cy="11.100" r="3.700" fill="#fff" stroke="none"/><path d="M10.300 8.900v4.400M8.400 10l3.800 2.200M12.200 10l-3.800 2.200" stroke="#3478c6" stroke-width="0.800"/></svg>
<span class="t" style="left:347.97px;top:2368.89px;font:400 43px/43px 'Liberation Sans',sans-serif;color:#ffffff;letter-spacing:1.077px;-webkit-text-stroke:0.47px;">hoyyeva/vs-code-doc*</span>
<svg style="left:812.6px;top:2360.2px;" width="58.0" height="58.0" viewBox="0 0 16 16" fill="none" stroke="#ffffff" stroke-width="0.95" stroke-linecap="round" stroke-linejoin="round"><path d="M3.100 10.400A5.300 5.300 0 0 1 9.400 2.900"/><path d="M7.400 1l2.300 1.900-1.900 2.300"/><path d="M12.900 5.600A5.300 5.300 0 0 1 6.600 13.100"/><path d="M8.600 15l-2.300-1.900 1.900-2.300"/></svg>
<svg style="left:924.8px;top:2361.5px;" width="55.3" height="55.3" viewBox="0 0 16 16" fill="none" stroke="#ffffff" stroke-width="1.0" stroke-linecap="round" stroke-linejoin="round"><circle cx="8" cy="8" r="6.500"/><path d="M5.600 5.600l4.800 4.800M10.400 5.600l-4.800 4.800"/></svg>
<span class="t" style="left:991.47px;top:2367.89px;font:400 43px/43px 'Liberation Sans',sans-serif;color:#ffffff;-webkit-text-stroke:0.47px;">8</span>
<svg style="left:1029.3px;top:2361.8px;" width="55.3" height="55.3" viewBox="0 0 16 16" fill="none" stroke="#ffffff" stroke-width="1.0" stroke-linecap="round" stroke-linejoin="round"><path d="M8 1.900L14.600 13.300a.5.500 0 0 1-.43.750H1.830a.5.500 0 0 1-.43-.750L8 1.900z"/><path d="M8 6.200v3.600"/><circle cx="8" cy="11.700" r=".55" fill="#fff" stroke="none"/></svg>
<span class="t" style="left:1096.97px;top:2367.89px;font:400 43px/43px 'Liberation Sans',sans-serif;color:#ffffff;-webkit-text-stroke:0.47px;">9</span>
<svg style="left:1177.0px;top:2361.3px;" width="55.3" height="55.3" viewBox="0 0 16 16" fill="none" stroke="#ffffff" stroke-width="1.0" stroke-linecap="round" stroke-linejoin="round"><path d="M6.69 1.58L9.31 1.58Q9.27 3.42 10.28 4.06Q11.33 4.61 12.91 3.66L14.21 5.92Q12.60 6.81 12.55 8.00Q12.60 9.19 14.21 10.08L12.91 12.34Q11.33 11.39 10.28 11.94Q9.27 12.58 9.31 14.42L6.69 14.42Q6.73 12.58 5.73 11.94Q4.67 11.39 3.09 12.34L1.79 10.08Q3.40 9.19 3.45 8.00Q3.40 6.81 1.79 5.92L3.09 3.66Q4.67 4.61 5.72 4.06Q6.73 3.42 6.69 1.58Z"/><circle cx="8" cy="8" r="1.6"/></svg>
<span class="t" style="left:1245.47px;top:2367.89px;font:400 43px/43px 'Liberation Sans',sans-serif;color:#ffffff;letter-spacing:0.139px;-webkit-text-stroke:0.47px;">Build</span>
<svg style="left:1397.8px;top:2361.3px;" width="55.3" height="55.3" viewBox="0 0 16 16" fill="none" stroke="#ffffff" stroke-width="1.0" stroke-linecap="round" stroke-linejoin="round"><path d="M5 6.200a3 3 0 0 1 6 0v3.600a3 3 0 0 1-6 0z"/><path d="M5.700 4.300L4.400 2.900M10.300 4.300l1.300-1.400M5 8H2.300M11 8h2.700M5.600 11.500l-1.600 1.800M10.400 11.500l1.600 1.800M5.400 5.700h5.200"/></svg>
<svg style="left:1509.8px;top:2361.8px;" width="55.3" height="55.3" viewBox="0 0 16 16" fill="none" stroke="#ffffff" stroke-width="1.0" stroke-linecap="round" stroke-linejoin="round"><path d="M4.600 2.700v10.600a.5.500 0 0 0 .76.430l8.300-5.300a.5.500 0 0 0 0-.850L5.360 2.270A.5.500 0 0 0 4.600 2.700z"/></svg>
<span class="t" style="left:1620.47px;top:2367.89px;font:400 43px/43px 'Liberation Sans',sans-serif;color:#ffffff;letter-spacing:1.059px;-webkit-text-stroke:0.47px;">-- NORMAL --</span>
<span class="t" style="left:2228.97px;top:2367.89px;font:400 43px/43px 'Liberation Sans',sans-serif;color:#ffffff;letter-spacing:-0.125px;-webkit-text-stroke:0.47px;">Tab Size: 4</span>
<span class="t" style="left:2496.97px;top:2367.89px;font:400 43px/43px 'Liberation Sans',sans-serif;color:#ffffff;letter-spacing:0.938px;-webkit-text-stroke:0.47px;">UTF-8</span>
<span class="t" style="left:2678.97px;top:2367.89px;font:400 43px/43px 'Liberation Sans',sans-serif;color:#ffffff;letter-spacing:-4.046px;-webkit-text-stroke:0.47px;">LF</span>
<svg style="left:2781.8px;top:2362.3px;" width="55.3" height="55.3" viewBox="0 0 16 16" fill="none" stroke="#ffffff" stroke-width="1.0" stroke-linecap="round" stroke-linejoin="round"><path d="M5.300 2.300h-.6a1.500 1.500 0 0 0-1.500 1.500v2.100c0 .8-.4 1.300-1.100 1.600.7.300 1.100.8 1.100 1.600v2.100a1.500 1.500 0 0 0 1.500 1.500h.6M10.700 2.300h.6a1.500 1.500 0 0 1 1.500 1.500v2.100c0 .8.400 1.300 1.100 1.600-.5.200-.8.500-1 .9"/><circle cx="11.700" cy="12.800" r="2.600" fill="#fff" stroke="none"/></svg>
<span class="t" style="left:2858.47px;top:2367.89px;font:400 43px/43px 'Liberation Sans',sans-serif;color:#ffffff;letter-spacing:-4.546px;-webkit-text-stroke:0.47px;">Go</span>
<svg style="left:2966.3px;top:2360.2px;" width="58.0" height="58.0" viewBox="0 0 16 16" fill="none" stroke="#ffffff" stroke-width="1.0" stroke-linecap="round" stroke-linejoin="round"><path d="M2.200 9.300C1.300 9.800.9 10.500.9 11.300c0 1.900 3.200 3.400 7.100 3.400s7.100-1.500 7.100-3.400c0-.8-.4-1.500-1.300-2" fill="#fff" stroke="#fff" stroke-width="1.200"/><rect x="2.300" y="2" width="5.300" height="5.600" rx="2.300" stroke-width="1.500"/><rect x="8.400" y="2" width="5.300" height="5.600" rx="2.300" stroke-width="1.500"/><path d="M2.600 6.800v4.500c1.300 1.200 3.200 1.800 5.400 1.800s4.100-.6 5.400-1.800V6.800z" fill="#fff" stroke="#fff"/><rect x="5.400" y="9.300" width="1.300" height="2.500" rx=".65" fill="#3478c6" stroke="none"/><rect x="9.300" y="9.300" width="1.300" height="2.500" rx=".65" fill="#3478c6" stroke="none"/></svg>
<span class="t" style="left:3080.47px;top:2367.89px;font:400 43px/43px 'Liberation Sans',sans-serif;color:#ffffff;letter-spacing:0.911px;-webkit-text-stroke:0.47px;">1.25.4</span>
<svg style="left:3207.3px;top:2361.7px;" width="55.3" height="55.3" viewBox="0 0 16 16" fill="none" stroke="#ffffff" stroke-width="1.0" stroke-linecap="round" stroke-linejoin="round"><path d="M6.300 1.700h5.100l-1.900 4.300h3.200L5.300 14.600l1.500-5.900H3.900z"/></svg>
<svg style="left:3321.6px;top:2365.5px;" width="48.0" height="48.0" viewBox="0 0 16 16" fill="none" stroke="#ffffff" stroke-width="1.15" stroke-linecap="round" stroke-linejoin="round"><path d="M5.500 1.800l.95 2.600a1.500 1.500 0 0 0 .9.900l2.600.95-2.600.95a1.500 1.500 0 0 0-.9.900L5.500 10.700l-.95-2.600a1.500 1.500 0 0 0-.9-.9L1.050 6.250l2.600-.95a1.500 1.500 0 0 0 .9-.9z"/><path d="M11.600 8.900l.6 1.650a1 1 0 0 0 .6.600l1.650.6-1.650.6a1 1 0 0 0-.6.600l-.6 1.650-.6-1.650a1 1 0 0 0-.6-.6l-1.650-.6 1.650-.6a1 1 0 0 0 .6-.6z"/></svg>
<span class="t" style="left:3385.47px;top:2367.89px;font:400 43px/43px 'Liberation Sans',sans-serif;color:#ffffff;letter-spacing:0.107px;-webkit-text-stroke:0.47px;">Patchwork</span>
<svg style="left:3643.3px;top:2361.5px;" width="55.3" height="55.3" viewBox="0 0 16 16" fill="none" stroke="#ffffff" stroke-width="1.0" stroke-linecap="round" stroke-linejoin="round"><path d="M8 1.800a4.300 4.300 0 0 0-4.300 4.300v3.300L2.500 11.700a.4.400 0 0 0 .35.600h10.300a.4.400 0 0 0 .35-.600L12.300 9.400V6.100A4.300 4.300 0 0 0 8 1.800z"/><path d="M6.700 12.500a1.300 1.300 0 0 0 2.600 0"/></svg>
</div>
<div style="left:156.0px;top:136.0px;width:3558.0px;height:2.0px;background:rgba(255,255,255,.38);"></div>
</body></html>
